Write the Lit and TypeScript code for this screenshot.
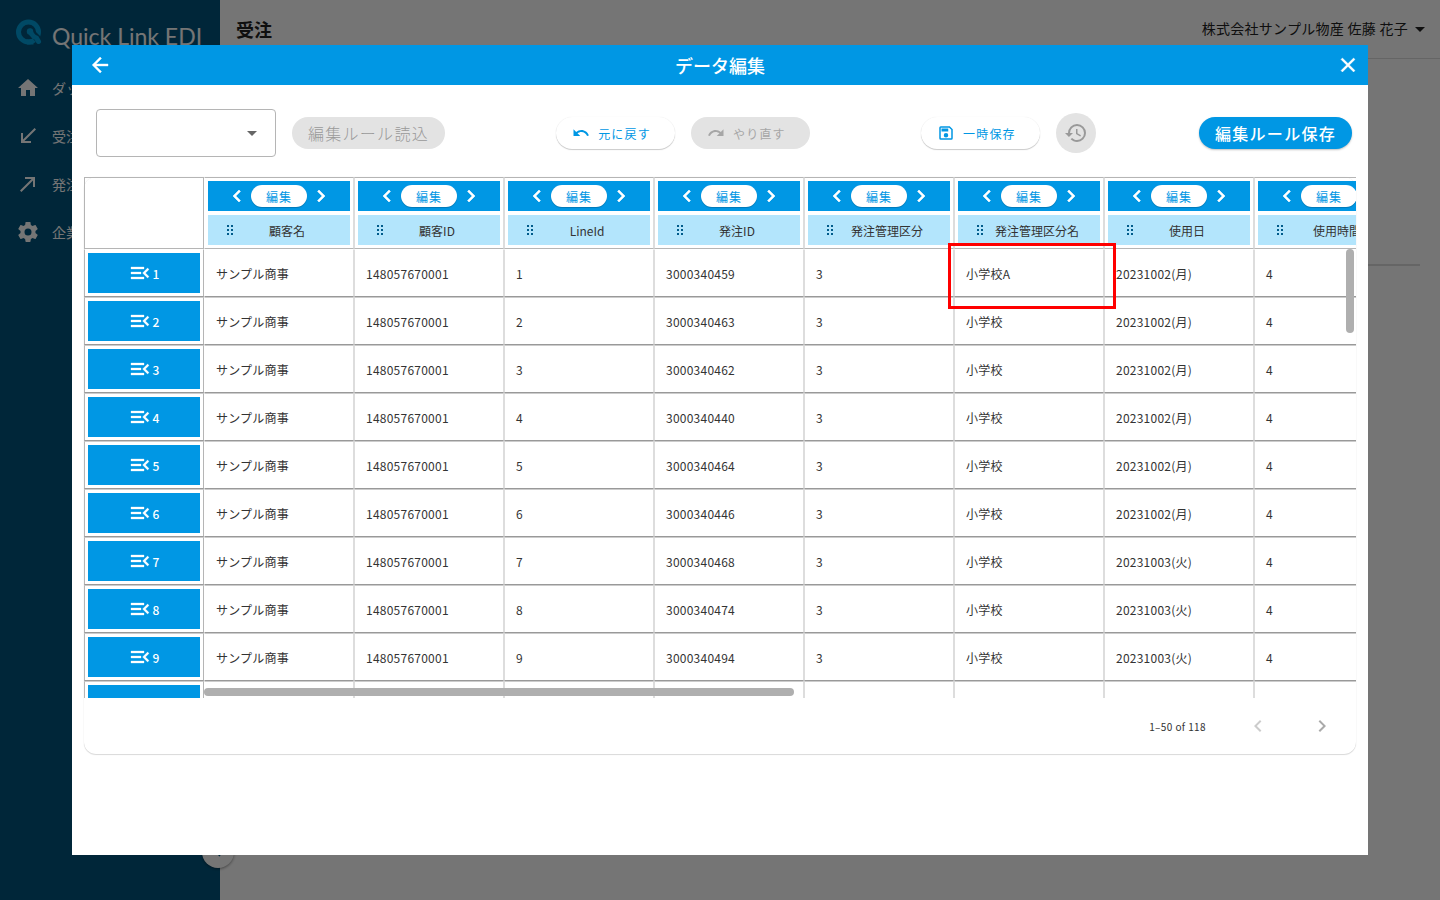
import { LitElement, html, css, svg, nothing } from "lit";
import { customElement } from "lit/decorators.js";

const ICONS = {
  home: "M10,20V14H14V20H19V12H22L12,3L2,12H5V20H10Z",
  received: "M20,5.41L18.59,4L7,15.59V9H5V19H15V17H8.41L20,5.41Z",
  made: "M9,5V7H15.59L4,18.59L5.41,20L17,8.41V15H19V5H9Z",
  cog: "M12,15.5A3.5,3.5 0 0,1 8.5,12A3.5,3.5 0 0,1 12,8.5A3.5,3.5 0 0,1 15.5,12A3.5,3.5 0 0,1 12,15.5M19.43,12.97C19.47,12.65 19.5,12.33 19.5,12C19.5,11.67 19.47,11.34 19.43,11L21.54,9.37C21.73,9.22 21.78,8.95 21.66,8.73L19.66,5.27C19.54,5.05 19.27,4.96 19.05,5.05L16.56,6.05C16.04,5.66 15.5,5.32 14.87,5.07L14.5,2.42C14.46,2.18 14.25,2 14,2H10C9.75,2 9.54,2.18 9.5,2.42L9.13,5.07C8.5,5.32 7.96,5.66 7.44,6.05L4.95,5.05C4.73,4.96 4.46,5.05 4.34,5.27L2.34,8.73C2.21,8.95 2.27,9.22 2.46,9.37L4.57,11C4.53,11.34 4.5,11.67 4.5,12C4.5,12.33 4.53,12.65 4.57,12.97L2.46,14.63C2.27,14.78 2.21,15.05 2.34,15.27L4.34,18.73C4.46,18.95 4.73,19.03 4.95,18.95L7.44,17.94C7.96,18.34 8.5,18.68 9.13,18.93L9.5,21.58C9.54,21.82 9.75,22 10,22H14C14.25,22 14.46,21.82 14.5,21.58L14.87,18.93C15.5,18.67 16.04,18.34 16.56,17.94L19.05,18.95C19.27,19.03 19.54,18.95 19.66,18.73L21.66,15.27C21.78,15.05 21.73,14.78 21.54,14.63L19.43,12.97Z",
  back: "M20,11V13H8L13.5,18.5L12.08,19.92L4.16,12L12.08,4.08L13.5,5.5L8,11H20Z",
  close: "M19,6.41L17.59,5L12,10.59L6.41,5L5,6.41L10.59,12L5,17.59L6.41,19L12,13.41L17.59,19L19,17.59L13.41,12L19,6.41Z",
  down: "M7,10L12,15L17,10H7Z",
  undo: "M12.5,8C9.85,8 7.45,9 5.6,10.6L2,7V16H11L7.38,12.38C8.77,11.22 10.54,10.5 12.5,10.5C16.04,10.5 19.05,12.81 20.1,16L22.47,15.22C21.08,11.03 17.15,8 12.5,8Z",
  redo: "M18.4,10.6C16.55,9 14.15,8 11.5,8C6.85,8 2.92,11.03 1.54,15.22L3.9,16C4.95,12.81 7.95,10.5 11.5,10.5C13.45,10.5 15.23,11.22 16.62,12.38L13,16H22V7L18.4,10.6Z",
  save: "M17,3H5A2,2 0 0,0 3,5V19A2,2 0 0,0 5,21H19A2,2 0 0,0 21,19V7L17,3M19,19H5V5H16.17L19,7.83V19M12,12A3,3 0 0,0 9,15A3,3 0 0,0 12,18A3,3 0 0,0 15,15A3,3 0 0,0 12,12M6,6H15V10H6V6Z",
  history: "M13.5,8H12V13L16.28,15.54L17,14.33L13.5,12.25V8M13,3A9,9 0 0,0 4,12H1L4.96,16.03L9,12H6A7,7 0 0,1 13,5A7,7 0 0,1 20,12A7,7 0 0,1 13,19C11.07,19 9.32,18.21 8.06,16.94L6.64,18.36C8.27,20 10.5,21 13,21A9,9 0 0,0 22,12A9,9 0 0,0 13,3",
  left: "M15.41,16.58L10.83,12L15.41,7.41L14,6L8,12L14,18L15.41,16.58Z",
  right: "M8.59,16.58L13.17,12L8.59,7.41L10,6L16,12L10,18L8.59,16.58Z",
  menuOpen: "M21,15.61L19.59,17L14.58,12L19.59,7L21,8.39L17.44,12L21,15.61M3,6H16V8H3V6M3,13V11H13V13H3M3,18V16H16V18H3Z",
} as const;

type IconName = keyof typeof ICONS;

const icon = (name: IconName, size = 24) => html`
  <svg class="icon" width=${size} height=${size} viewBox="0 0 24 24" aria-hidden="true">
    <path d=${ICONS[name]} />
  </svg>
`;

const grip = html`
  <svg class="grip" width="20" height="20" viewBox="0 0 20 20" aria-hidden="true">
    ${[7, 11].map((x) => [5, 9, 13].map((y) => svg`<rect x=${x} y=${y} width="2" height="2" />`))}
  </svg>
`;

const COLUMNS = ["顧客名", "顧客ID", "LineId", "発注ID", "発注管理区分", "発注管理区分名", "使用日", "使用時間"];

const ORDERS: [string, string][] = [
  ["3000340459", "20231002(月)"],
  ["3000340463", "20231002(月)"],
  ["3000340462", "20231002(月)"],
  ["3000340440", "20231002(月)"],
  ["3000340464", "20231002(月)"],
  ["3000340446", "20231002(月)"],
  ["3000340468", "20231003(火)"],
  ["3000340474", "20231003(火)"],
  ["3000340494", "20231003(火)"],
];

const ROWS = ORDERS.map(([order, day], i) => [
  "サンプル商事",
  "148057670001",
  String(i + 1),
  order,
  "3",
  i === 0 ? "小学校A" : "小学校",
  day,
  "4",
]);

const base = css`
  * {
    box-sizing: border-box;
  }
  button {
    border: 0;
    padding: 0;
    background: none;
    color: inherit;
    font: inherit;
    letter-spacing: inherit;
    cursor: pointer;
  }
  button:disabled {
    cursor: default;
  }
  .icon {
    display: block;
    flex: none;
    fill: currentColor;
  }
`;

@customElement("edit-table")
class EditTable extends LitElement {
  static styles = [
    base,
    css`
      :host {
        display: flex;
        flex-direction: column;
        min-height: 0;
        border-radius: 12px;
        background: #fff;
        box-shadow: 0 1px 1px rgba(0, 0, 0, 0.14), 0 0 1px rgba(0, 0, 0, 0.12);
      }
      .frame {
        position: relative;
        flex: 1;
        min-height: 0;
        overflow: hidden;
      }
      table {
        table-layout: fixed;
        width: 1320px;
        border-collapse: separate;
        border-spacing: 0;
        font-size: 12px;
        line-height: 20px;
        letter-spacing: 0.02em;
      }
      .num-col {
        width: 120px;
      }
      .data-col {
        width: 150px;
      }
      th,
      td {
        padding: 3px;
        font-weight: 400;
        text-align: left;
        border: 1px solid #ddd;
      }
      thead th {
        height: 72px;
        border-top-color: #b5b5b5;
        border-bottom-color: #b5b5b5;
      }
      tbody td,
      tbody th {
        height: 48px;
        border-top-color: #ccc;
        border-bottom-color: #999;
      }
      tbody tr:first-child > * {
        border-top-color: transparent;
      }
      tr > :first-child {
        border-left-color: #b5b5b5;
        border-right-color: #b5b5b5;
      }
      tr > :nth-child(2) {
        border-left-color: transparent;
      }
      tbody td {
        position: relative;
        padding: 1px 11px 0;
        color: #333;
      }
      .tools {
        display: flex;
        align-items: center;
        justify-content: center;
        gap: 2px;
        height: 30px;
        background: #0097e4;
        color: #fff;
      }
      .tools .icon {
        stroke: currentColor;
        stroke-width: 0.6;
      }
      .row-btn .icon {
        stroke: currentColor;
        stroke-width: 0.3;
      }
      .edit {
        width: 56px;
        height: 22px;
        padding-top: 2px;
        border-radius: 11px;
        background: #fff;
        color: #0097e4;
        letter-spacing: 0.0893em;
        box-shadow: 0 1px 1px rgba(0, 0, 0, 0.2);
      }
      .name {
        display: flex;
        align-items: center;
        height: 30px;
        margin-top: 4px;
        padding: 0 16px 0 12px;
        background: #b3e5fc;
        color: #333;
        letter-spacing: 0;
      }
      .name span {
        flex: 1;
        padding-top: 2px;
        text-align: center;
        white-space: nowrap;
      }
      .grip {
        flex: none;
        fill: #005b8a;
      }
      .row-btn {
        display: flex;
        align-items: center;
        justify-content: center;
        width: 100%;
        height: 40px;
        background: #0097e4;
        color: #fff;
        font-weight: 500;
      }
      .row-btn span {
        padding-top: 2px;
      }
      .mark {
        position: absolute;
        z-index: 1;
        inset: -7px -13px -13px -7px;
        border: 3px solid #f00;
        pointer-events: none;
      }
      .thumb {
        position: absolute;
        border-radius: 4px;
        background: #afafaf;
      }
      .thumb-y {
        top: 72px;
        right: 2px;
        width: 8px;
        height: 84px;
      }
      .thumb-x {
        left: 120px;
        bottom: 2px;
        width: 590px;
        height: 8px;
      }
      .pager {
        display: flex;
        align-items: center;
        justify-content: flex-end;
        height: 56px;
        padding-right: 10px;
        font-size: 10px;
        letter-spacing: 0.04em;
        color: #333;
      }
      .pager span {
        padding-top: 2px;
        margin-right: 28px;
      }
      .pager button {
        display: grid;
        place-items: center;
        width: 48px;
        height: 48px;
        color: #aaa;
      }
      .pager button + button {
        margin-left: 16px;
      }
      .pager button:disabled {
        color: #ccc;
      }
    `,
  ];

  render() {
    return html`
      <div class="frame">
        <table>
          <colgroup>
            <col class="num-col" />
            ${COLUMNS.map(() => html`<col class="data-col" />`)}
          </colgroup>
          <thead>
            <tr>
              <th aria-label="行"></th>
              ${COLUMNS.map(
                (name) => html`
                  <th scope="col">
                    <div class="tools">
                      <button aria-label="左へ">${icon("left")}</button>
                      <button class="edit">編集</button>
                      <button aria-label="右へ">${icon("right")}</button>
                    </div>
                    <div class="name">${grip}<span>${name}</span></div>
                  </th>
                `
              )}
            </tr>
          </thead>
          <tbody>
            ${ROWS.map(
              (row, i) => html`
                <tr>
                  <th scope="row">
                    <button class="row-btn">${icon("menuOpen")}<span>${i + 1}</span></button>
                  </th>
                  ${row.map(
                    (value, c) => html`<td>${value}${i === 0 && c === 5 ? html`<div class="mark"></div>` : nothing}</td>`
                  )}
                </tr>
              `
            )}
            <tr>
              <th scope="row"><button class="row-btn" aria-label="次の行"></button></th>
              ${COLUMNS.map(() => html`<td></td>`)}
            </tr>
          </tbody>
        </table>
        <div class="thumb thumb-y"></div>
        <div class="thumb thumb-x"></div>
      </div>
      <div class="pager">
        <span>1–50 of 118</span>
        <button disabled aria-label="前のページ">${icon("left")}</button>
        <button aria-label="次のページ">${icon("right")}</button>
      </div>
    `;
  }
}

@customElement("edit-dialog")
class EditDialog extends LitElement {
  static styles = [
    base,
    css`
      :host {
        display: flex;
        flex-direction: column;
        background: #fff;
        color: #222;
      }
      .bar {
        display: grid;
        grid-template-columns: 40px 1fr 40px;
        align-items: center;
        height: 40px;
        padding: 0 0 0 8px;
        background: #0097e4;
        color: #fff;
      }
      .bar button {
        display: grid;
        place-items: center;
        height: 40px;
      }
      .bar .icon {
        stroke: currentColor;
        stroke-width: 0.4;
      }
      h2 {
        margin: 0;
        padding-right: 8px;
        font-size: 18px;
        font-weight: 500;
        line-height: 24px;
        text-align: center;
      }
      .actions {
        display: flex;
        align-items: center;
        justify-content: space-between;
        padding: 24px 16px 20px 24px;
      }
      .group {
        display: flex;
        align-items: center;
        gap: 16px;
      }
      .drafts {
        margin-right: -8px;
      }
      .picker {
        display: grid;
        align-items: center;
        justify-items: end;
      }
      .picker > * {
        grid-area: 1 / 1;
      }
      .picker .icon {
        margin-right: 12px;
        color: #666;
        pointer-events: none;
      }
      select {
        appearance: none;
        width: 180px;
        height: 48px;
        padding: 0 40px 0 12px;
        border: 1px solid #b5b5b5;
        border-radius: 4px;
        background: #fff;
        font: inherit;
      }
      .pill {
        height: 32px;
        padding: 0 16px;
        border-radius: 16px;
        font-size: 16px;
        font-weight: 300;
        letter-spacing: 0.08em;
        white-space: nowrap;
      }
      .primary {
        background: #0097e4;
        color: #fff;
        font-weight: 500;
        box-shadow: 0 1px 2px rgba(0, 0, 0, 0.25);
      }
      .small {
        display: flex;
        align-items: center;
        gap: 8px;
        padding: 0 24px 0 16px;
        font-size: 12px;
        font-weight: 400;
        letter-spacing: 0.1em;
        color: #0097e4;
        background: #fff;
        box-shadow: 0 1px 1px rgba(0, 0, 0, 0.2), 0 0 1px rgba(0, 0, 0, 0.1);
      }
      .small span {
        padding-top: 2px;
      }
      .round {
        display: grid;
        place-items: center;
        width: 40px;
        height: 40px;
        border-radius: 50%;
      }
      .actions button:disabled {
        background: #e3e3e3;
        color: #999;
        box-shadow: none;
      }
      .actions .small:disabled {
        color: #a6a6a6;
      }
      edit-table {
        flex: 1;
        margin: 0 12px 101px;
      }
    `,
  ];

  render() {
    return html`
      <header class="bar">
        <button aria-label="戻る">${icon("back")}</button>
        <h2>データ編集</h2>
        <button aria-label="閉じる">${icon("close")}</button>
      </header>
      <div class="actions">
        <div class="group">
          <label class="picker">
            <select aria-label="編集ルール"></select>
            ${icon("down")}
          </label>
          <button class="pill" disabled>編集ルール読込</button>
        </div>
        <div class="group">
          <button class="pill small">${icon("undo", 18)}<span>元に戻す</span></button>
          <button class="pill small" disabled>${icon("redo", 18)}<span>やり直す</span></button>
        </div>
        <div class="group drafts">
          <button class="pill small">${icon("save", 18)}<span>一時保存</span></button>
          <button class="round" disabled aria-label="履歴">${icon("history")}</button>
        </div>
        <button class="pill primary">編集ルール保存</button>
      </div>
      <edit-table></edit-table>
    `;
  }
}

@customElement("app-root")
class AppRoot extends LitElement {
  static styles = [
    base,
    css`
      :host {
        position: relative;
        display: grid;
        grid-template-columns: 220px 1fr;
        height: 100vh;
        overflow: hidden;
        background: #fff;
        color: #222;
        font-family: "Noto Sans CJK JP", sans-serif;
        font-size: 14px;
        line-height: 20px;
      }
      .side {
        position: relative;
        padding-top: 16px;
        background: #00547d;
        color: #fff;
      }
      .brand {
        display: flex;
        gap: 10px;
        height: 48px;
        padding-left: 14px;
      }
      .brand svg {
        margin-top: 2px;
      }
      .brand span {
        padding-top: 4px;
        font-family: Lato, sans-serif;
        font-size: 23px;
        line-height: 32px;
        white-space: nowrap;
      }
      .side a {
        display: flex;
        align-items: center;
        gap: 12px;
        height: 48px;
        padding-left: 16px;
        color: inherit;
        text-decoration: none;
        white-space: nowrap;
      }
      .fold {
        position: absolute;
        right: -14px;
        bottom: 32px;
        display: grid;
        place-items: center;
        width: 32px;
        height: 32px;
        border-radius: 50%;
        background: #fff;
        color: #00547d;
        box-shadow: 0 1px 3px rgba(0, 0, 0, 0.4);
      }
      .top {
        display: flex;
        align-items: center;
        justify-content: space-between;
        height: 59px;
        padding: 0 8px 0 16px;
        border-bottom: 1px solid #ddd;
      }
      h1 {
        margin: 0;
        font-size: 18px;
        font-weight: 700;
        line-height: 24px;
      }
      .user {
        display: flex;
        align-items: center;
        letter-spacing: 0.02em;
      }
      .user span {
        padding-bottom: 2px;
      }
      .rule {
        height: 2px;
        margin: 205px 20px 0;
        border: 0;
        background: #ddd;
      }
      .scrim {
        position: absolute;
        inset: 0;
        display: grid;
        place-items: center;
        background: rgba(0, 0, 0, 0.54);
      }
      edit-dialog {
        width: 90%;
        height: 90%;
      }
    `,
  ];

  render() {
    const links: [IconName, string][] = [
      ["home", "ダッシュボード"],
      ["received", "受注"],
      ["made", "発注"],
      ["cog", "企業設定"],
    ];
    return html`
      <nav class="side">
        <div class="brand">
          <svg width="28" height="28" viewBox="0 0 28 28" aria-hidden="true">
            <circle cx="14.5" cy="14" r="10" fill="none" stroke="#00a0dc" stroke-width="5" />
            <path d="M18 15L27 24" stroke="#00547d" stroke-width="7" />
            <circle cx="16" cy="13.500" r="3.200" fill="#00a0dc" />
            <path d="M16 13.500L18 16.500Q19.500 19 22.500 20L24.500 23.500" fill="none" stroke="#00a0dc" stroke-width="5" stroke-linecap="round" />
            <path d="M13 21.500H17.500Q19 22 19.500 26.500H13Z" fill="#00a0dc" />
          </svg>
          <span>Quick Link EDI</span>
        </div>
        ${links.map(([name, text]) => html`<a href="#">${icon(name)}<span>${text}</span></a>`)}
        <button class="fold" aria-label="メニューを閉じる">${icon("left", 18)}</button>
      </nav>
      <main>
        <header class="top">
          <h1>受注</h1>
          <button class="user"><span>株式会社サンプル物産 佐藤 花子</span>${icon("down")}</button>
        </header>
        <hr class="rule" />
      </main>
      <div class="scrim">
        <edit-dialog role="dialog" aria-label="データ編集"></edit-dialog>
      </div>
    `;
  }
}
